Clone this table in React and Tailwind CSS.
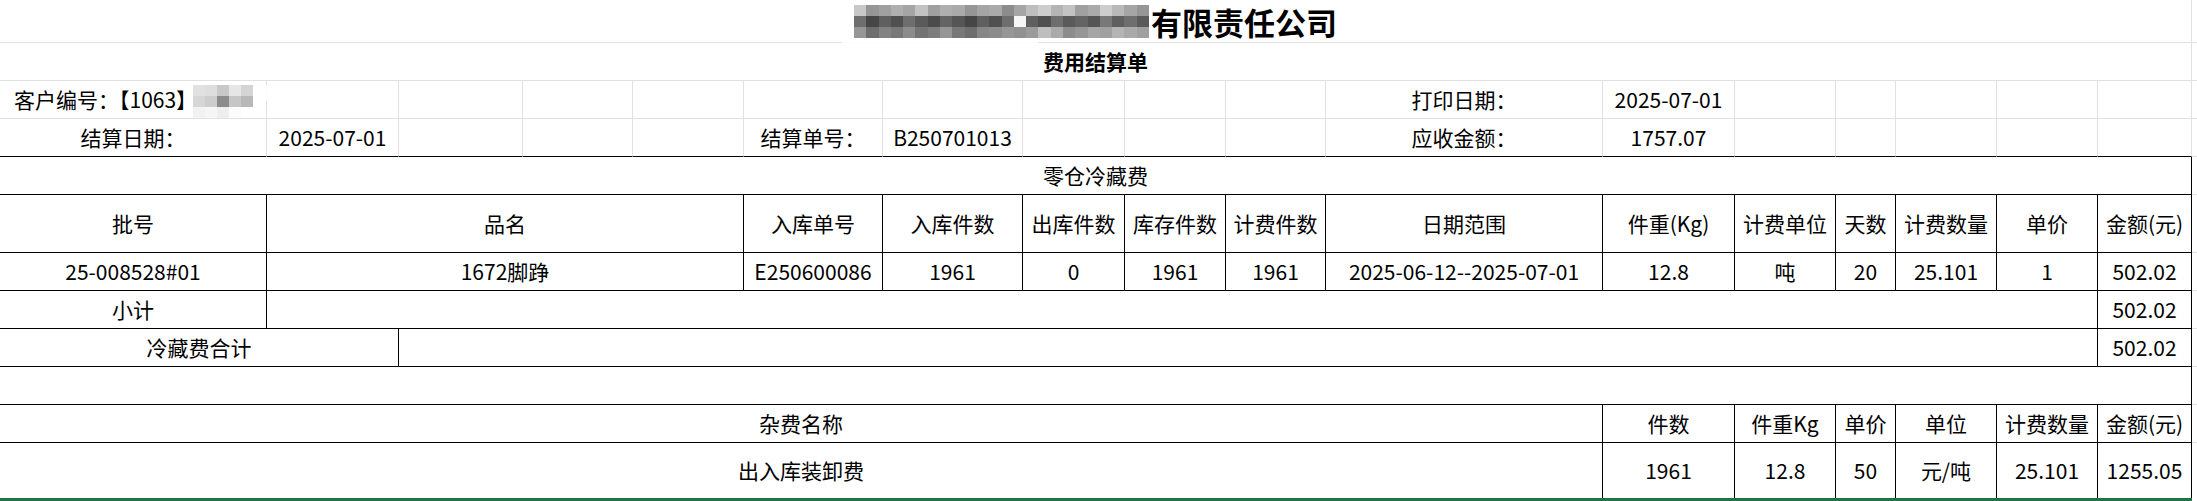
import React from "react";

const G =
  "grid grid-cols-[267px_132px_124px_110px_111px_139px_140px_102px_101px_100px_277px_132px_101px_60px_101px_101px_94px_1fr]";

const gr = "border-r border-r-[#e1e1e1]";
const gb = "border-b border-b-[#e1e1e1]";
const kr = "border-r border-r-black";
const kb = "border-b border-b-black";

function C({ className = "", children }) {
  return (
    <div className={"flex items-center justify-center whitespace-nowrap " + className}>
      {children}
    </div>
  );
}

const titleMosaic = [
  [200, 150, 160, 175, 165, 195, 160, 175, 170, 150, 165, 170, 140, 165, 190, 205, 180, 195, 160, 170, 205, 185, 165, 150],
  [110, 70, 95, 80, 110, 90, 75, 100, 85, 70, 95, 80, 110, 245, 95, 80, 110, 90, 100, 85, 120, 95, 110, 90],
  [150, 110, 130, 120, 140, 115, 125, 150, 120, 110, 135, 140, 150, 145, 155, 190, 170, 140, 150, 165, 160, 180, 170, 160],
];

const custMosaic = [
  [225, 222, 200, 230, 212],
  [214, 205, 140, 198, 184],
  [242, 246, 238, 252, 255],
];

function Mosaic({ data, blockClass }) {
  return (
    <div className="flex flex-col">
      {data.map((row, i) => (
        <div key={i} className="flex">
          {row.map((v, j) => (
            <div
              key={j}
              className={blockClass}
              style={{ backgroundColor: `rgb(${v},${v},${v})` }}
            />
          ))}
        </div>
      ))}
    </div>
  );
}

export default function App() {
  return (
    <div className="w-[2197px] h-[501px] overflow-hidden bg-white text-black text-[21px] leading-none font-['Noto_Sans_CJK_SC','Noto_Sans',sans-serif]">
      {/* Row 1: title */}
      <div className={G + " h-[43px]"}>
        <div className={"col-span-17 relative flex items-center justify-center " + gr + " " + gb}>
          <div className="relative mr-[2px]">
            <Mosaic data={titleMosaic} blockClass="w-[12.3px] h-[11px]" />
            <div className="absolute left-[-12px] top-[33px] w-[196px] h-[11px] bg-white/90" />
          </div>
          <span className="font-bold text-[31px]">有限责任公司</span>
        </div>
        <div className={gb} />
      </div>

      {/* Row 2: subtitle */}
      <div className={G + " h-[38px]"}>
        <C className={"col-span-17 font-bold " + gr + " " + gb}>费用结算单</C>
        <div className={gb} />
      </div>

      {/* Row 3 */}
      <div className={G + " h-[38px]"}>
        <div className={"relative flex items-center pl-[14px] whitespace-nowrap " + gr + " " + gb}>
          客户编号：【1063】
          <div className="absolute left-[193px] top-[4px] flex">
            <Mosaic data={custMosaic} blockClass="w-[12px] h-[11px]" />
            <div className="w-[26px] h-[16px] bg-white/90" />
          </div>
        </div>
        <div className={gr + " " + gb} />
        <div className={gr + " " + gb} />
        <div className={gr + " " + gb} />
        <div className={gr + " " + gb} />
        <div className={gr + " " + gb} />
        <div className={gr + " " + gb} />
        <div className={gr + " " + gb} />
        <div className={gr + " " + gb} />
        <div className={gr + " " + gb} />
        <C className={gr + " " + gb}>打印日期：</C>
        <C className={gr + " " + gb}>2025-07-01</C>
        <div className={gr + " " + gb} />
        <div className={gr + " " + gb} />
        <div className={gr + " " + gb} />
        <div className={gr + " " + gb} />
        <div className={gr + " " + gb} />
        <div className={gb} />
      </div>

      {/* Row 4 */}
      <div className={G + " h-[38px]"}>
        <C className={gr + " " + kb}>结算日期：</C>
        <C className={gr + " " + kb}>2025-07-01</C>
        <div className={gr + " " + kb} />
        <div className={gr + " " + kb} />
        <div className={gr + " " + kb} />
        <C className={gr + " " + kb}>结算单号：</C>
        <C className={gr + " " + kb}>B250701013</C>
        <div className={gr + " " + kb} />
        <div className={gr + " " + kb} />
        <div className={gr + " " + kb} />
        <C className={gr + " " + kb}>应收金额：</C>
        <C className={gr + " " + kb}>1757.07</C>
        <div className={gr + " " + kb} />
        <div className={gr + " " + kb} />
        <div className={gr + " " + kb} />
        <div className={gr + " " + kb} />
        <div className={gr + " " + kb} />
        <div className={gb} />
      </div>

      {/* Row 5: section title */}
      <div className={G + " h-[38px]"}>
        <C className={"col-span-17 " + kr + " " + kb}>零仓冷藏费</C>
        <div className={gb} />
      </div>

      {/* Row 6: header */}
      <div className={G + " h-[58px]"}>
        <C className={kr + " " + kb}>批号</C>
        <C className={"col-span-4 " + kr + " " + kb}>品名</C>
        <C className={kr + " " + kb}>入库单号</C>
        <C className={kr + " " + kb}>入库件数</C>
        <C className={kr + " " + kb}>出库件数</C>
        <C className={kr + " " + kb}>库存件数</C>
        <C className={kr + " " + kb}>计费件数</C>
        <C className={kr + " " + kb}>日期范围</C>
        <C className={kr + " " + kb}>件重(Kg)</C>
        <C className={kr + " " + kb}>计费单位</C>
        <C className={kr + " " + kb}>天数</C>
        <C className={kr + " " + kb}>计费数量</C>
        <C className={kr + " " + kb}>单价</C>
        <C className={kr + " " + kb}>金额(元)</C>
        <div className={gb} />
      </div>

      {/* Row 7: data */}
      <div className={G + " h-[38px]"}>
        <C className={kr + " " + kb}>25-008528#01</C>
        <C className={"col-span-4 " + kr + " " + kb}>1672脚踭</C>
        <C className={kr + " " + kb}>E250600086</C>
        <C className={kr + " " + kb}>1961</C>
        <C className={kr + " " + kb}>0</C>
        <C className={kr + " " + kb}>1961</C>
        <C className={kr + " " + kb}>1961</C>
        <C className={kr + " " + kb}>2025-06-12--2025-07-01</C>
        <C className={kr + " " + kb}>12.8</C>
        <C className={kr + " " + kb}>吨</C>
        <C className={kr + " " + kb}>20</C>
        <C className={kr + " " + kb}>25.101</C>
        <C className={kr + " " + kb}>1</C>
        <C className={kr + " " + kb}>502.02</C>
        <div className={gb} />
      </div>

      {/* Row 8: subtotal */}
      <div className={G + " h-[38px]"}>
        <C className={kr + " " + kb}>小计</C>
        <div className={"col-span-15 " + kr + " " + kb} />
        <C className={kr + " " + kb}>502.02</C>
        <div className={gb} />
      </div>

      {/* Row 9: total */}
      <div className={G + " h-[38px]"}>
        <C className={"col-span-2 " + kr + " " + kb}>冷藏费合计</C>
        <div className={"col-span-14 " + kr + " " + kb} />
        <C className={kr + " " + kb}>502.02</C>
        <div className={gb} />
      </div>

      {/* Row 10: blank */}
      <div className={G + " h-[38px]"}>
        <div className={"col-span-17 " + kr + " " + kb} />
        <div className={gb} />
      </div>

      {/* Row 11: misc header */}
      <div className={G + " h-[38px]"}>
        <C className={"col-span-11 " + kr + " " + kb}>杂费名称</C>
        <C className={kr + " " + kb}>件数</C>
        <C className={kr + " " + kb}>件重Kg</C>
        <C className={kr + " " + kb}>单价</C>
        <C className={kr + " " + kb}>单位</C>
        <C className={kr + " " + kb}>计费数量</C>
        <C className={kr + " " + kb}>金额(元)</C>
        <div className={gb} />
      </div>

      {/* Row 12: misc data */}
      <div className={G + " h-[55px]"}>
        <C className={"col-span-11 " + kr}>出入库装卸费</C>
        <C className={kr}>1961</C>
        <C className={kr}>12.8</C>
        <C className={kr}>50</C>
        <C className={kr}>元/吨</C>
        <C className={kr}>25.101</C>
        <C className={kr}>1255.05</C>
        <div />
      </div>

      <div className="h-[3px] w-[2192px] bg-[#217346]" />
    </div>
  );
}
